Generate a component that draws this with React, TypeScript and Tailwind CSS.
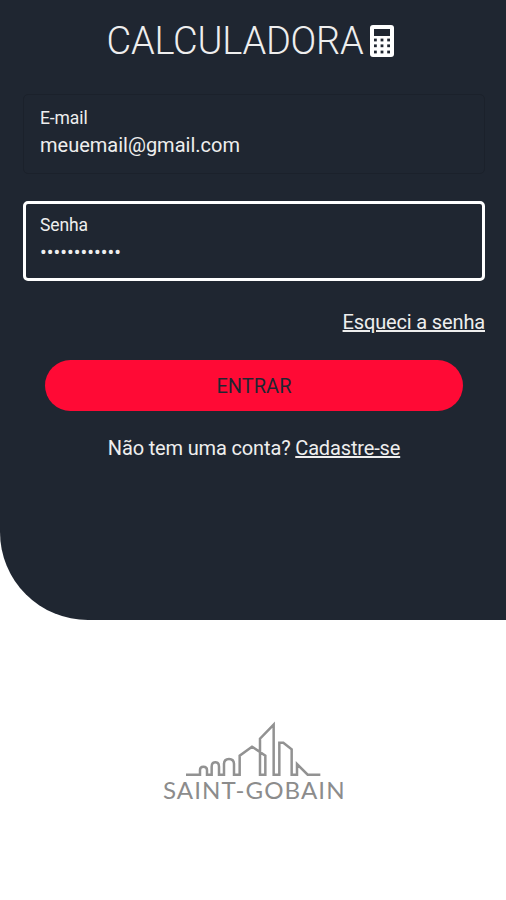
interface FieldProps {
  label: string;
  value: string;
  type: string;
  className: string;
}

function CalculatorIcon() {
  return (
    <svg className="h-8 w-6" viewBox="0 0 24 32" aria-hidden="true">
      <rect width="24" height="32" rx="3" fill="#fff" />
      <g fill="#1f2631">
        <rect x="4" y="4" width="16" height="7" />
        {[13.6, 19.4, 25.6].map(y =>
          [4, 10.6, 17.2].map(x => (
            <rect key={`${x}-${y}`} x={x} y={y} width="2.8" height="2.8" />
          ))
        )}
      </g>
    </svg>
  );
}

function Field({ label, value, type, className }: FieldProps) {
  return (
    <label className={`block rounded-[5px] ${className}`}>
      <span className="block h-[26px] text-[17.5px] leading-[26px] tracking-[-0.1px]">{label}</span>
      <input
        type={type}
        defaultValue={value}
        className="block h-7 w-full bg-transparent text-xl leading-7 outline-none"
      />
    </label>
  );
}

function Logo() {
  return (
    <svg className="h-[90px] w-[200px]" viewBox="0 0 600 270">
      <path
        d="M93 176H135V162Q135 152 145 152Q156 152 156 162V176H170V152Q170 139 181 139Q192 139 192 152V176H207V145Q207 129 222 129Q237 129 237 145V176H254V119L291 92L331 119V176H315V68L356 26V176H373V80H385L410 100V176H426V144L458 176H496"
        fill="none"
        stroke="#929292"
        strokeWidth="7.5"
      />
      <text
        x="24"
        y="248"
        textLength="548"
        lengthAdjust="spacingAndGlyphs"
        fill="#8c8c8c"
        fontFamily="Lato, sans-serif"
        fontSize="67"
        letterSpacing="3"
      >
        SAINT-GOBAIN
      </text>
    </svg>
  );
}

export default function App() {
  return (
    <div className="flex min-h-[900px] flex-col bg-white font-['Roboto',sans-serif] text-[#eeeeee]">
      <main className="h-[620px] rounded-bl-[88px] bg-[#1f2631] pt-5 pr-[21px] pl-[23px]">
        <h1 className="flex h-[42px] items-center justify-center gap-[7px] pr-[7px] text-[38px] font-light tracking-[-0.25px]">
          <span>CALCULADORA</span>
          <CalculatorIcon />
        </h1>

        <form className="mt-8">
          <Field
            label="E-mail"
            type="text"
            value="meuemail@gmail.com"
            className="h-20 border border-[#1b212b] px-4 pt-[10px]"
          />
          <Field
            label="Senha"
            type="password"
            value="abcdefghijkl"
            className="mt-[27px] h-20 border-[3px] border-white px-[14px] pt-[8px]"
          />
          <div className="mt-[27px] h-7 text-right text-xl leading-7 tracking-[-0.15px]">
            <a className="underline">Esqueci a senha</a>
          </div>
          <button
            type="button"
            className="mx-auto mt-[24px] block h-[51px] w-[418px] rounded-full bg-[#ff0a35] text-xl text-[#1f2631]"
          >
            ENTRAR
          </button>
        </form>

        <p className="mt-[23px] text-center text-xl leading-7 tracking-[-0.15px]">
          Não tem uma conta? <a className="underline">Cadastre-se</a>
        </p>
      </main>

      <footer className="flex justify-center pt-24 pl-1">
        <Logo />
      </footer>
    </div>
  );
}
